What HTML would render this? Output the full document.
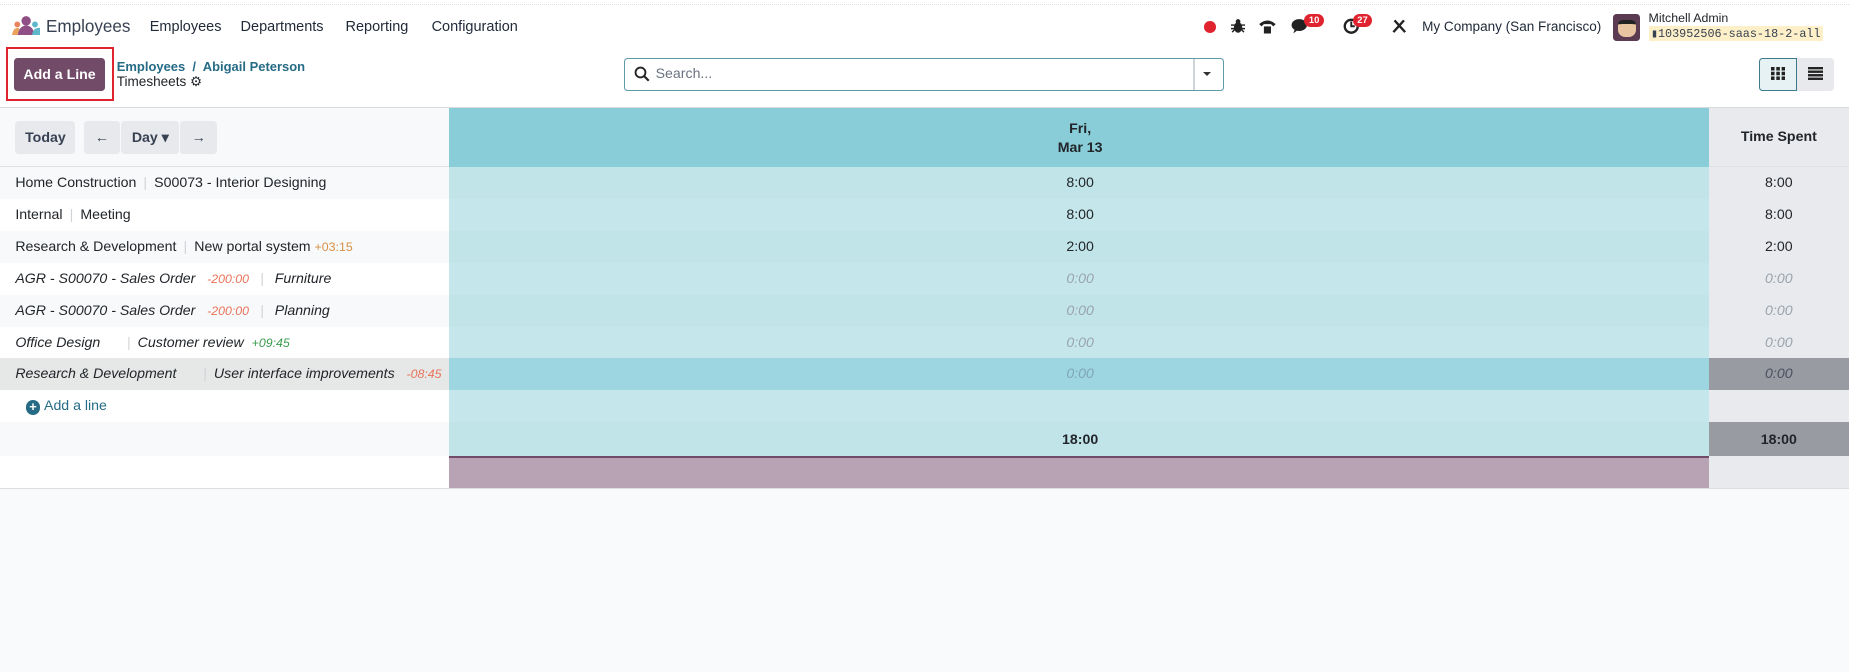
<!DOCTYPE html>
<html><head><meta charset="utf-8"><style>
*{box-sizing:border-box;margin:0;padding:0}
html,body{width:1849px;height:672px;overflow:hidden;background:#f9fafb}
#w{zoom:1.1792;width:1568px;height:570px;position:relative;font-family:"Liberation Sans",sans-serif;font-size:12px;color:#212529}
.a{position:absolute;white-space:nowrap}
.top{left:0;top:0;width:1568px;height:92px;background:#fff;border-bottom:1px solid #d8dadd}
.nav span{position:absolute;top:16px;font-size:12.3px;color:#1f2937}
.btn{background:#e7e9ed;border-radius:3px;font-weight:bold;font-size:12px;color:#374151;text-align:center;line-height:28px}
.row{position:absolute;left:0;width:1568px;height:27px}
.l{position:absolute;left:0;width:381px;height:27px;padding-left:13px;line-height:27px;white-space:nowrap;overflow:hidden}
.m{position:absolute;left:381px;width:1068px;height:27px;text-align:center;line-height:27px;padding-left:2px}
.r{position:absolute;left:1449px;width:119px;height:27px;text-align:center;line-height:27px;background:#e9eaed}
.sep{color:#d0d3d8;margin:0 6px}
.i{font-style:italic}
.z{color:#9aa4ad;font-style:italic}
.b{font-weight:bold}
.s{font-size:10.5px}
.badge{position:absolute;background:#e0242f;color:#fff;font-size:8px;font-weight:bold;border-radius:7px;padding:0 4px;line-height:11px}
</style></head><body><div id="w">
<div class="a top"></div>
<div class="a" style="left:0;top:3px;width:1568px;border-top:1px dotted #ddd"></div>
<svg class="a" style="left:10px;top:13px" width="24" height="18" viewBox="0 0 24 18"><circle cx="12" cy="5" r="4" fill="#8f4f86"/><circle cx="4.5" cy="8" r="2.5" fill="#e9845f"/><circle cx="19.5" cy="8" r="2.5" fill="#5fb8c9"/><path d="M0 17 Q1 10 6 11 L7 17Z" fill="#e9a35f"/><path d="M5 17 Q6 9 12 9 Q18 9 19 17Z" fill="#8f4f86"/><path d="M17 17 Q18 10 24 11 L24 17Z" fill="#5fb8c9"/></svg>
<div class="nav">
<span style="left:39px;font-size:14.5px;top:14px;color:#374151">Employees</span>
<span style="left:127px">Employees</span>
<span style="left:204px">Departments</span>
<span style="left:293px">Reporting</span>
<span style="left:366px">Configuration</span>
</div>
<div class="a" style="left:1021px;top:18px;width:10px;height:10px;border-radius:50%;background:#e0242f"></div>
<svg class="a" style="left:1044px;top:15px" width="12" height="13" viewBox="0 0 12 13"><ellipse cx="6" cy="8" rx="3.5" ry="4.5" fill="#222"/><circle cx="6" cy="3" r="2" fill="#222"/><path d="M0 6H12M0 9H12M1 12L3 10M11 12L9 10" stroke="#222" stroke-width="1.2"/></svg>
<svg class="a" style="left:1067px;top:14px" width="16" height="16" viewBox="0 0 16 16"><path d="M1 6 Q8 0 15 6 L13 8 L11 6 L5 6 L3 8Z" fill="#222"/><rect x="5" y="8" width="6" height="6" fill="#222"/></svg>
<svg class="a" style="left:1095px;top:15px" width="16" height="14" viewBox="0 0 16 14"><ellipse cx="7" cy="6" rx="6.5" ry="5" fill="#222"/><path d="M3 10 L2 13 L6 10Z" fill="#222"/></svg>
<div class="badge" style="left:1106px;top:12px">10</div>
<svg class="a" style="left:1139px;top:15px" width="14" height="14" viewBox="0 0 14 14"><circle cx="7" cy="7" r="5.5" fill="none" stroke="#222" stroke-width="2"/><path d="M7 3V7H10" stroke="#222" stroke-width="1.6" fill="none"/></svg>
<div class="badge" style="left:1147px;top:12px">27</div>
<svg class="a" style="left:1180px;top:15px" width="14" height="14" viewBox="0 0 14 14"><path d="M3 2 L12 12 M11 2 L2 12" stroke="#222" stroke-width="2"/></svg>
<span class="a" style="left:1206px;top:16px;color:#1f2937;font-size:11.5px">My Company (San Francisco)</span>
<div class="a" style="left:1368px;top:12px;width:23px;height:23px;border-radius:3px;background:#5a3b52"><div style="margin:5px 4px;width:15px;height:14px;background:#e8c4a0;border-radius:4px 4px 6px 6px;border-top:4px solid #222"></div></div>
<span class="a" style="left:1398px;top:9px;font-size:10.5px">Mitchell Admin</span>
<span class="a" style="left:1398px;top:22px;font-size:10px;background:#fdf0c9;font-family:'Liberation Mono',monospace;padding:0 2px;color:#374151">▮103952506-saas-18-2-all</span>
<div class="a" style="left:5px;top:40px;width:92px;height:46px;border:2px solid #e0242f"></div>
<div class="a" style="left:12px;top:49px;width:77px;height:28px;background:#714b67;border-radius:3px;color:#fff;font-weight:bold;font-size:12px;text-align:center;line-height:28px">Add a Line</div>
<span class="a" style="left:99px;top:50px;color:#266b86;font-size:11px;font-weight:bold">Employees &nbsp;/&nbsp; Abigail Peterson</span>
<span class="a" style="left:99px;top:63px;font-size:11.5px">Timesheets <span>⚙</span></span>
<div class="a" style="left:529px;top:49px;width:509px;height:28px;border:1px solid #5d9bad;border-radius:3px;background:#fff"></div>
<svg class="a" style="left:538px;top:56px" width="14" height="14" viewBox="0 0 14 14"><circle cx="5.5" cy="5.5" r="4.2" fill="none" stroke="#222" stroke-width="1.6"/><path d="M8.5 8.5 L12.5 12.5" stroke="#222" stroke-width="1.8"/></svg>
<span class="a" style="left:556px;top:55px;color:#6b7280">Search...</span>
<div class="a" style="left:1012px;top:50px;width:1px;height:26px;background:#cfd4da"></div>
<div class="a" style="left:1020px;top:61px;border:4px solid transparent;border-top:4px solid #333"></div>
<div class="a" style="left:1492px;top:49px;width:63px;height:28px;background:#e7e9ed;border-radius:3px"></div>
<div class="a" style="left:1492px;top:49px;width:32px;height:28px;background:#e6f2f4;border:1px solid #3d7a8e;border-radius:3px 0 0 3px"></div>
<svg class="a" style="left:1502px;top:57px" width="12" height="11" viewBox="0 0 12 11"><g fill="#222"><rect x="0" y="0" width="3" height="3"/><rect x="4.5" y="0" width="3" height="3"/><rect x="9" y="0" width="3" height="3"/><rect x="0" y="4" width="3" height="3"/><rect x="4.5" y="4" width="3" height="3"/><rect x="9" y="4" width="3" height="3"/><rect x="0" y="8" width="3" height="3"/><rect x="4.5" y="8" width="3" height="3"/><rect x="9" y="8" width="3" height="3"/></g></svg>
<svg class="a" style="left:1533px;top:57px" width="13" height="11" viewBox="0 0 13 11"><g fill="#222"><rect y="0" width="13" height="2"/><rect y="3" width="13" height="2"/><rect y="6" width="13" height="2"/><rect y="9" width="13" height="2"/></g></svg>
<div class="a" style="left:0;top:92px;width:381px;height:50px;background:#f8f9fa;border-bottom:1px solid #dee2e6"></div>
<div class="a btn" style="left:13px;top:103px;width:51px">Today</div>
<div class="a btn" style="left:71px;top:103px;width:31px">←</div>
<div class="a btn" style="left:103px;top:103px;width:49px">Day ▾</div>
<div class="a btn" style="left:153px;top:103px;width:31px">→</div>
<div class="a b" style="left:381px;top:92px;width:1068px;height:50px;background:#88cdd7;text-align:center;padding-top:9px;line-height:16px;font-size:12px;padding-left:2px">Fri,<br>Mar 13</div>
<div class="a b" style="left:1449px;top:92px;width:119px;height:50px;background:#e9eaed;text-align:center;line-height:49px;font-size:12px;border-bottom:1px solid #dee2e6">Time Spent</div>
<div class="row" style="top:142px"><div class="l" style="background:#f8f9fa">Home Construction<span class="sep">|</span>S00073 - Interior Designing</div><div class="m" style="background:#c1e4e9">8:00</div><div class="r">8:00</div></div>
<div class="row" style="top:169px"><div class="l" style="background:#fff">Internal<span class="sep">|</span>Meeting</div><div class="m" style="background:#c5e7eb">8:00</div><div class="r">8:00</div></div>
<div class="row" style="top:196px"><div class="l" style="background:#f8f9fa">Research &amp; Development<span class="sep">|</span>New portal system <span class="s" style="color:#d69046">+03:15</span></div><div class="m" style="background:#c1e4e9">2:00</div><div class="r">2:00</div></div>
<div class="row" style="top:223px"><div class="l i" style="background:#fff">AGR - S00070 - Sales Order &nbsp; <span class="s" style="color:#e8735a">-200:00</span> <span class="sep">|</span> Furniture</div><div class="m z" style="background:#c5e7eb">0:00</div><div class="r z">0:00</div></div>
<div class="row" style="top:250px"><div class="l i" style="background:#f8f9fa">AGR - S00070 - Sales Order &nbsp; <span class="s" style="color:#e8735a">-200:00</span> <span class="sep">|</span> Planning</div><div class="m z" style="background:#c1e4e9">0:00</div><div class="r z">0:00</div></div>
<div class="row" style="top:277px"><div class="l i" style="background:#fff">Office Design &nbsp; &nbsp; <span class="sep">|</span>Customer review &nbsp;<span class="s" style="color:#3b9c4f">+09:45</span></div><div class="m z" style="background:#c5e7eb">0:00</div><div class="r z">0:00</div></div>
<div class="row" style="top:304px"><div class="l i" style="background:#e6e7e7">Research &amp; Development &nbsp; &nbsp; <span class="sep">|</span>User interface improvements &nbsp; <span class="s" style="color:#e8735a">-08:45</span></div><div class="m z" style="background:#9dd5e0;color:#7fa7b4">0:00</div><div class="r i" style="background:#999ba3;color:#4b5060">0:00</div></div>
<div class="row" style="top:331px"><div class="l" style="background:#fff;padding-left:22px;color:#266b86;font-weight:bold"><span style="display:inline-block;width:12px;height:12px;border-radius:50%;background:#266b86;color:#fff;font-size:11px;line-height:12px;text-align:center;vertical-align:-1px">+</span> <span style="font-weight:normal">Add a line</span></div><div class="m" style="background:#c5e7eb"></div><div class="r"></div></div>
<div class="row" style="top:358px;height:29px"><div class="l" style="background:#f8f9fa;height:29px"></div><div class="m b" style="background:#c1e4e9;height:29px;line-height:29px">18:00</div><div class="r b" style="background:#999ba3;height:29px;line-height:29px">18:00</div></div>
<div class="row" style="top:387px"><div class="l" style="background:#fff"></div><div class="m" style="background:#b7a3b3;border-top:2px solid #714b67"></div><div class="r"></div></div>
<div class="a" style="left:0;top:414px;width:1568px;height:1px;background:#dcdfe3"></div>
</div></body></html>
